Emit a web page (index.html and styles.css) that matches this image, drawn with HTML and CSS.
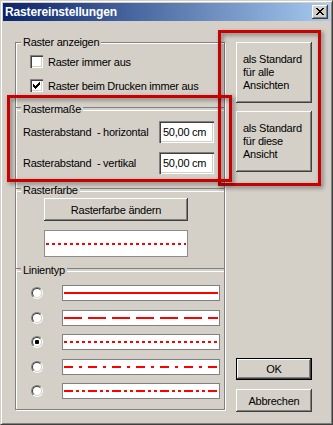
FILE: index.html
```html
<!DOCTYPE html>
<html lang="de">
<head>
<meta charset="utf-8">
<title>Rastereinstellungen</title>
<link rel="stylesheet" href="styles.css">
</head>
<body>
<div class="window">
  <div class="titlebar">
    <span class="title">Rastereinstellungen</span>
    <span class="close"><svg width="8" height="7" viewBox="0 0 8 7" shape-rendering="crispEdges"><path fill="#000" d="M0 0h2v1H0zM6 0h2v1H6zM1 1h2v1H1zM5 1h2v1H5zM2 2h4v1H2zM3 3h2v1H3zM2 4h4v1H2zM1 5h2v1H1zM5 5h2v1H5zM0 6h2v1H0zM6 6h2v1H6z"/></svg></span>
  </div>
  <div class="dialog">
    <div class="group">
      <div class="head top"><span>Raster anzeigen</span></div>
      <div class="check-row r1"><span class="checkbox"></span><span>Raster immer aus</span></div>
      <div class="check-row r2"><span class="checkbox"><svg width="7" height="7" viewBox="0 0 7 7" shape-rendering="crispEdges"><path fill="#000" d="M0 2V5H1V6H2V7H3V6H4V5H5V4H6V3H7V0H6V1H5V2H4V3H3V4H2V3H1V2Z"/></svg></span><span>Raster beim Drucken immer aus</span></div>

      <div class="head h2"><span>Rastermaße</span></div>
      <div class="field-row f1"><span class="field-label">Rasterabstand&nbsp; - horizontal</span><span class="input">50,00 cm</span></div>
      <div class="field-row f2"><span class="field-label">Rasterabstand&nbsp; - vertikal</span><span class="input">50,00 cm</span></div>

      <div class="head h3"><span>Rasterfarbe</span></div>
      <div class="btn color-btn">Rasterfarbe ändern</div>
      <div class="preview"><div class="ln dot"></div></div>

      <div class="head h4"><span>Linientyp</span></div>
      <div class="lines">
        <div class="line-row"><span class="radio"><i></i></span><span class="line-box"><span class="ln solid"></span></span></div>
        <div class="line-row"><span class="radio"><i></i></span><span class="line-box"><span class="ln dash"></span></span></div>
        <div class="line-row"><span class="radio on"><i></i></span><span class="line-box"><span class="ln dot"></span></span></div>
        <div class="line-row"><span class="radio"><i></i></span><span class="line-box"><span class="ln dashdot"></span></span></div>
        <div class="line-row"><span class="radio"><i></i></span><span class="line-box"><span class="ln dashdotdot"></span></span></div>
      </div>
    </div>

    <div class="side">
      <div class="btn big">als Standard<br>für alle<br>Ansichten</div>
      <div class="btn big">als Standard<br>für diese<br>Ansicht</div>
      <div class="btn ok">OK</div>
      <div class="btn cancel">Abbrechen</div>
    </div>
  </div>

  <div class="mark mark-right"></div>
  <div class="mark mark-left"></div>
</div>
</body>
</html>
```

FILE: styles.css
```css
* { box-sizing: border-box; }
html, body { margin: 0; padding: 0; }
body {
  background: #d4d0c8;
  font-family: "Liberation Sans", Arial, sans-serif;
  font-size: 11px;
  letter-spacing: -0.25px;
  color: #000;
}

.window {
  position: relative;
  width: 333px;
  height: 425px;
  background: #d4d0c8;
  border: 1px solid;
  border-color: #d4d0c8 #404040 #404040 #d4d0c8;
  box-shadow: inset 1px 1px #fff, inset -1px -1px #808080;
  padding: 2px;
}

.titlebar {
  display: flex;
  align-items: center;
  justify-content: space-between;
  height: 18px;
  padding: 0 2px;
  background: linear-gradient(90deg, #0a246a, #a6caf0);
  color: #fff;
  font-weight: bold;
  font-size: 12px;
  letter-spacing: -0.15px;
  line-height: 18px;
}

.close {
  width: 16px;
  height: 14px;
  display: flex;
  align-items: center;
  justify-content: center;
  padding: 0 1px 1px 0;
  background: #d4d0c8;
  box-shadow: inset -1px -1px #404040, inset 1px 1px #fff, inset -2px -2px #808080;
}
.close svg { display: block; }

.dialog {
  display: flex;
  align-items: flex-start;
  padding: 21px 0 0 12px;
}

.group {
  width: 210px;
  border: 1px solid #808080;
  box-shadow: inset 1px 1px #fff, 1px 1px #fff;
  padding-bottom: 10px;
}

.head {
  display: flex;
  align-items: center;
  height: 14px;
}
.head::before,
.head::after {
  content: "";
  height: 2px;
  border-top: 1px solid #808080;
  border-bottom: 1px solid #fff;
}
.head::before { width: 5px; }
.head::after { flex: 1; }
.head span {
  padding: 0 2px;
  line-height: 14px;
  white-space: nowrap;
}
.head.top { margin-top: -8px; }
.head.top::before,
.head.top::after { visibility: hidden; }
.head.top span { background: #d4d0c8; }
.head.h2 { margin-top: 10px; }
.head.h3 { margin-top: 9px; }
.head.h4 { margin-top: 6px; }

.check-row {
  display: flex;
  align-items: center;
  gap: 5px;
  height: 13px;
  padding-left: 14px;
  white-space: nowrap;
}
.check-row.r1 { margin-top: 6px; }
.check-row.r2 { margin-top: 11px; }

.checkbox {
  width: 13px;
  height: 13px;
  flex: none;
  background: #fff;
  padding: 3px 0 0 3px;
  box-shadow: inset 1px 1px #808080, inset 2px 2px #404040, inset -1px -1px #fff, inset -2px -2px #d4d0c8;
}
.checkbox svg { display: block; }

.field-row {
  display: flex;
  align-items: center;
  height: 22px;
  padding-left: 7px;
}
.field-row.f1 { margin-top: 5px; }
.field-row.f2 { margin-top: 9px; }
.field-label {
  width: 136px;
  white-space: pre;
}
.input {
  width: 55px;
  height: 22px;
  line-height: 22px;
  padding-left: 4px;
  background: #fff;
  white-space: nowrap;
  box-shadow: inset 1px 1px #808080, inset 2px 2px #404040, inset -1px -1px #fff, inset -2px -2px #d4d0c8;
}

.btn {
  display: flex;
  align-items: center;
  justify-content: center;
  background: #d4d0c8;
  white-space: nowrap;
  box-shadow: inset -1px -1px #404040, inset 1px 1px #fff, inset -2px -2px #808080;
}

.color-btn {
  width: 144px;
  height: 23px;
  margin: 1px 0 0 28px;
}

.preview {
  width: 144px;
  height: 27px;
  margin: 9px 0 0 28px;
  display: flex;
  align-items: center;
  padding: 0 1px;
  background: #fff;
  border: 1px solid #8c8c8c;
}

.lines {
  display: flex;
  flex-direction: column;
  gap: 8.5px;
  margin-top: 8px;
}
.line-row {
  display: flex;
  align-items: center;
  height: 16px;
  padding-left: 15px;
}
.radio {
  width: 12px;
  height: 12px;
  flex: none;
  border-radius: 50%;
  border: 1px solid;
  border-color: #808080 #fff #fff #808080;
}
.radio i {
  display: block;
  width: 100%;
  height: 100%;
  border-radius: 50%;
  border: 1px solid;
  border-color: #404040 #d4d0c8 #d4d0c8 #404040;
  background: #fff;
}
.radio.on i::after {
  content: "";
  display: block;
  width: 4px;
  height: 4px;
  margin: 2px;
  border-radius: 1px;
  background: #000;
}
.line-box {
  display: flex;
  align-items: center;
  width: 158px;
  height: 16px;
  margin-left: 19px;
  padding: 0 1px;
  background: #fff;
  border: 1px solid #808080;
}

.ln {
  display: block;
  width: 100%;
  height: 2px;
}
.solid { background: #f00; }
.dash { background: repeating-linear-gradient(90deg, #f00 0 18px, transparent 18px 24px); }
.dot { background: repeating-linear-gradient(90deg, #f00 0 3px, transparent 3px 6px); }
.dashdot { background: repeating-linear-gradient(90deg, #f00 0 9px, transparent 9px 15px, #f00 15px 18px, transparent 18px 24px); }
.dashdotdot { background: repeating-linear-gradient(90deg, #f00 0 9px, transparent 9px 12px, #f00 12px 15px, transparent 15px 18px, #f00 18px 21px, transparent 21px 24px); }

.side {
  display: flex;
  flex-direction: column;
  width: 76px;
  height: 370px;
  margin-left: 11px;
}
.big {
  height: 61px;
  justify-content: flex-start;
  padding-left: 7px;
  line-height: 13px;
}
.big + .big { margin-top: 8px; }
.ok {
  margin-top: auto;
  height: 22px;
  border: 1px solid #000;
}
.cancel {
  margin-top: 9px;
  height: 23px;
}

.mark {
  position: absolute;
  border: 3px solid #c80000;
  filter: drop-shadow(2px 2px 2px rgba(0, 0, 0, 0.45));
  pointer-events: none;
}
.mark-right {
  left: 217px;
  top: 29px;
  width: 103px;
  height: 156px;
}
.mark-left {
  left: 6px;
  top: 94px;
  width: 225px;
  height: 87px;
}
```
